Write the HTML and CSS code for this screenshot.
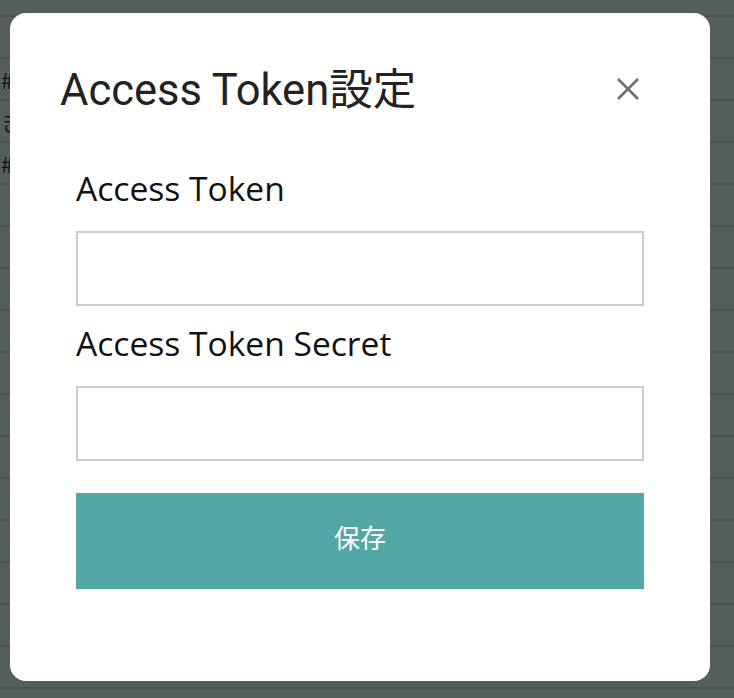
FILE: index.html
```html
<!DOCTYPE html>
<html lang="ja">
<head>
<meta charset="utf-8">
<title>Access Token設定</title>
<link rel="stylesheet" href="styles.css">
</head>
<body>
<div class="rows">
  <div class="row row-first"></div>
  <div class="row"></div>
  <div class="row">#</div>
  <div class="row">き</div>
  <div class="row">#</div>
  <div class="row"></div>
  <div class="row"></div>
  <div class="row"></div>
  <div class="row"></div>
  <div class="row"></div>
  <div class="row"></div>
  <div class="row"></div>
  <div class="row"></div>
  <div class="row"></div>
  <div class="row"></div>
  <div class="row"></div>
  <div class="row"></div>
  <div class="row"></div>
</div>

<div class="modal">
  <div class="modal-header">
    <h2 class="modal-title">Access Token設定</h2>
    <button class="close" type="button" aria-label="閉じる">
      <svg width="22" height="22" viewBox="0 0 22 22"><path d="M1 1 L21 21 M21 1 L1 21" stroke="#6f6f6f" stroke-width="2.6" stroke-linecap="butt" fill="none"/></svg>
    </button>
  </div>
  <form class="form">
    <label class="label" for="token">Access Token</label>
    <input class="input" id="token" type="text">
    <label class="label" for="secret">Access Token Secret</label>
    <input class="input" id="secret" type="text">
    <button class="save" type="button">保存</button>
  </form>
</div>
</body>
</html>
```

FILE: styles.css
```css
html, body {
  margin: 0;
  padding: 0;
}
body {
  background: #545e5c;
  font-family: "Noto Sans CJK JP", sans-serif;
  overflow: hidden;
}
.rows {
  display: flex;
  flex-direction: column;
}
.row {
  height: 40px;
  line-height: 40px;
  border-bottom: 2px solid #4a5351;
  color: #111;
  font-size: 22px;
  padding-left: 1px;
}
.row-first {
  height: 15px;
}
.modal {
  position: fixed;
  left: 10px;
  top: 13px;
  width: 700px;
  height: 668px;
  background: #fff;
  border-radius: 16px;
  box-sizing: border-box;
  padding-top: 54px;
}
.modal-header {
  display: flex;
  justify-content: space-between;
  align-items: flex-start;
  padding: 0 60px 0 50px;
}
.modal-title {
  margin: 0;
  font-family: Roboto, "Noto Sans CJK JP", sans-serif;
  font-weight: 400;
  font-size: 43.5px;
  line-height: 48px;
  color: #222;
}
.close {
  width: 44px;
  height: 44px;
  margin-top: 0;
  border: 0;
  padding: 0;
  background: transparent;
  display: flex;
  align-items: center;
  justify-content: center;
}
.form {
  display: flex;
  flex-direction: column;
  padding: 0 66px;
  margin-top: 49px;
}
.label {
  font-family: "Open Sans", "Noto Sans CJK JP", sans-serif;
  font-size: 33.6px;
  line-height: 48px;
  color: #111;
  margin-bottom: 19px;
}
.input {
  box-sizing: border-box;
  height: 75px;
  border: 2px solid #cccccc;
  margin: 0 0 13px;
  padding: 0 12px;
  font-size: 24px;
  outline: none;
}
.form .input:last-of-type {
  margin-bottom: 32px;
}
.save {
  height: 96px;
  border: 0;
  padding: 0 0 10px;
  background: #53a7a4;
  color: #fff;
  font-family: "Noto Sans CJK JP", sans-serif;
  font-size: 26px;
}
```
